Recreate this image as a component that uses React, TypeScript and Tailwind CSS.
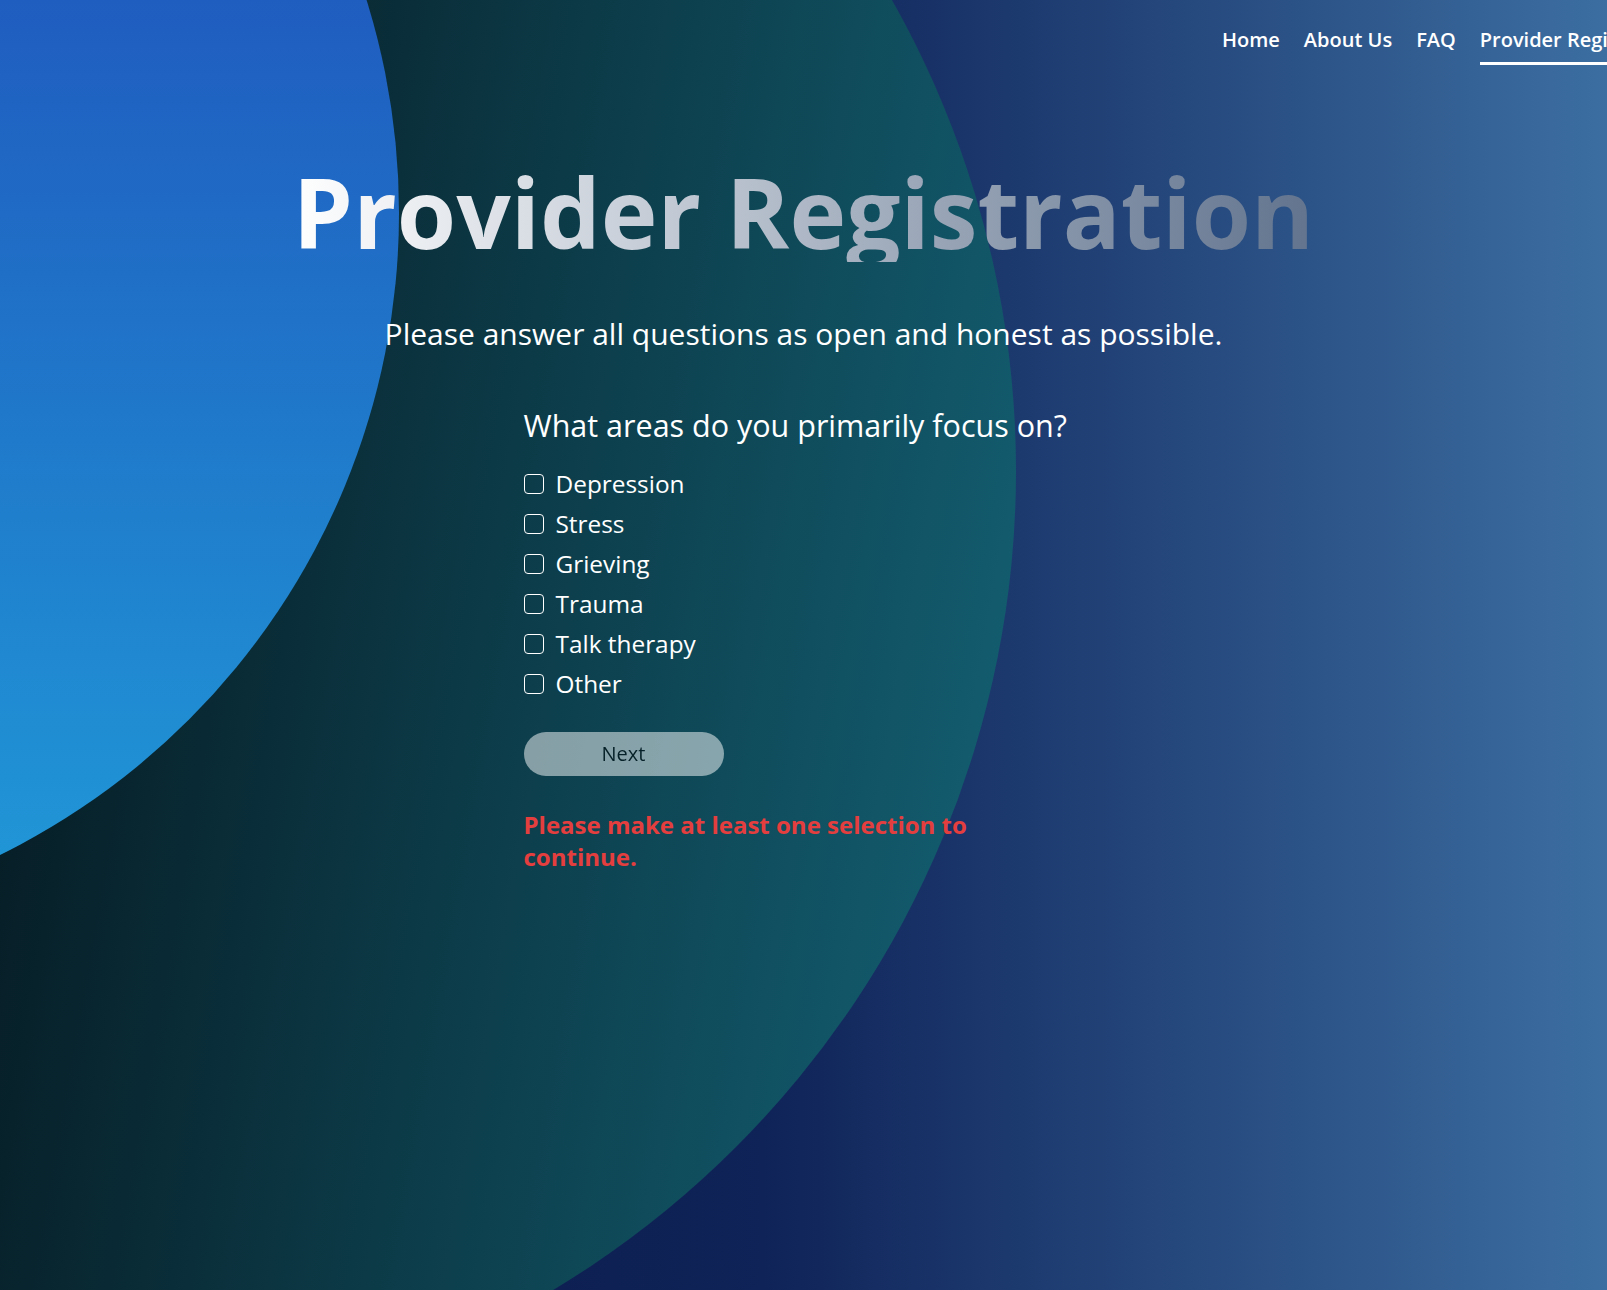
import { useState } from "react";

const links = ["Home", "About Us", "FAQ", "Provider Registration"];
const areas = ["Depression", "Stress", "Grieving", "Trauma", "Talk therapy", "Other"];

export default function App() {
  const [picked, setPicked] = useState<string[]>([]);

  const toggle = (area: string) =>
    setPicked((prev) => (prev.includes(area) ? prev.filter((a) => a !== area) : [...prev, area]));

  return (
    <div className="relative h-screen min-h-[1290px] overflow-hidden bg-[linear-gradient(to_right,#0a1745_0%,#0f2358_47.5%,#3c6ea2_100%)] font-['Open_Sans',sans-serif] text-white">
      {/* background blobs */}
      <div
        aria-hidden
        className="absolute left-[-896px] top-[-485px] h-[1912px] w-[1912px] rounded-full bg-[linear-gradient(100deg,#010508_0%,#061a22_47.3%,#125a6c_92.5%,#146478_100%)]"
      />
      <div
        aria-hidden
        className="absolute left-[-1033px] top-[-503px] h-[1432px] w-[1432px] rounded-full bg-[linear-gradient(to_bottom,#1f3cb2,#209ad8)]"
      />

      <div className="relative">
        {/* nav runs past the right edge, like the live page */}
        <header className="flex whitespace-nowrap pl-[1222px] pt-[26px]">
          <ul className="flex shrink-0 items-start gap-6 text-xl font-semibold">
            {links.map((label) => (
              <li
                key={label}
                className={
                  label === "Provider Registration"
                    ? "border-b-[3px] border-white pb-2"
                    : "pb-2"
                }
              >
                <a href="#">{label}</a>
              </li>
            ))}
          </ul>
        </header>

        <main className="flex flex-col items-center">
          <h1 className="mt-[97px] w-fit bg-gradient-to-r from-white to-slate-500 bg-clip-text text-8xl font-bold leading-[100px] text-transparent">
            Provider Registration
          </h1>
          <p className="mt-[54px] text-3xl">Please answer all questions as open and honest as possible.</p>

          <form className="mt-[55px] w-[560px]" onSubmit={(e) => e.preventDefault()}>
            <h2 className="text-[30.5px] leading-9">What areas do you primarily focus on?</h2>
            <div className="mt-[21px] flex flex-col">
              {areas.map((area) => (
                <label key={area} className="flex h-10 items-center gap-3 text-[24.4px] leading-8">
                  <input
                    type="checkbox"
                    checked={picked.includes(area)}
                    onChange={() => toggle(area)}
                    className="h-5 w-5 appearance-none rounded-[4px] border-[1.5px] border-white bg-transparent checked:bg-white"
                  />
                  <span>{area}</span>
                </label>
              ))}
            </div>
            <button
              type="submit"
              className="mt-7 w-[200px] rounded-full bg-white py-2 text-xl text-black opacity-50"
            >
              Next
            </button>
            {picked.length === 0 && (
              <p className="mt-[33px] max-w-[460px] text-2xl font-bold text-[#e53e3e]">
                Please make at least one selection to continue.
              </p>
            )}
          </form>
        </main>
      </div>
    </div>
  );
}
